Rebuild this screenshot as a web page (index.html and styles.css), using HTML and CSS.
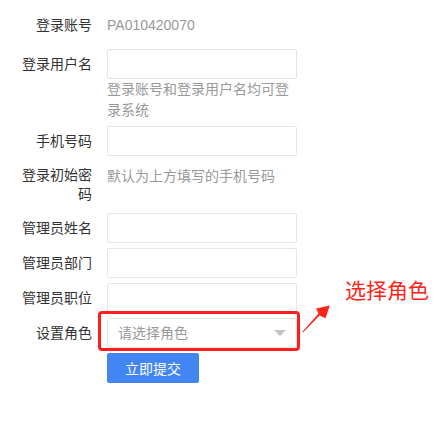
FILE: index.html
```html
<!DOCTYPE html>
<html lang="zh-CN">
<head>
<meta charset="utf-8">
<title>设置角色</title>
<link rel="stylesheet" href="styles.css">
</head>
<body>
<form class="form">
  <div class="row">
    <label class="label label-static">登录账号</label>
    <div class="value">PA010420070</div>
  </div>
  <div class="row">
    <label class="label">登录用户名</label>
    <div class="field">
      <input class="input" type="text">
      <div class="aux">登录账号和登录用户名均可登录系统</div>
    </div>
  </div>
  <div class="row">
    <label class="label">手机号码</label>
    <input class="input" type="text">
  </div>
  <div class="row">
    <label class="label label-wrap">登录初始密码</label>
    <div class="mid">默认为上方填写的手机号码</div>
  </div>
  <div class="row">
    <label class="label">管理员姓名</label>
    <input class="input" type="text">
  </div>
  <div class="row">
    <label class="label">管理员部门</label>
    <input class="input" type="text">
  </div>
  <div class="row">
    <label class="label">管理员职位</label>
    <input class="input" type="text">
  </div>
  <div class="row">
    <label class="label">设置角色</label>
    <div class="select-wrap">
      <div class="select">
        <span class="placeholder">请选择角色</span>
        <span class="edge"></span>
      </div>
      <div class="highlight"></div>
      <svg class="arrow" width="32" height="32" viewBox="0 0 32 32">
        <polygon points="3,29.6 19.6,12.6 25.6,15.2 29.8,2.6 16.2,5.4 18.4,10.8 2.4,28.8" fill="#ff2418"/>
      </svg>
      <div class="callout">选择角色</div>
    </div>
  </div>
  <div class="row">
    <span></span>
    <button class="btn" type="button">立即提交</button>
  </div>
</form>
</body>
</html>
```
FILE: styles.css
```css
* {
  box-sizing: border-box;
}

body {
  margin: 0;
  background: #fff;
  font-family: "Liberation Sans", "Noto Sans CJK SC", sans-serif;
  font-size: 14px;
  color: #333;
}

.form {
  padding: 6px 0 0 12px;
}

.row {
  display: grid;
  grid-template-columns: 80px 190px;
  column-gap: 15px;
  align-items: start;
  margin-bottom: 5px;
}

.label {
  text-align: right;
  padding: 5px 0;
  line-height: 20px;
  color: #333;
}

.label-static {
  padding: 9px 0;
}

.label-wrap {
  line-height: 18.5px;
}

.value {
  padding: 9px 0;
  line-height: 20px;
  color: #999;
}

.mid {
  padding: 5px 0;
  line-height: 20px;
  color: #999;
  white-space: nowrap;
}

.field {
  display: flex;
  flex-direction: column;
}

.input {
  display: block;
  width: 190px;
  height: 30px;
  margin: 0;
  padding: 0 10px;
  border: 1px solid #e6e6e6;
  border-radius: 2px;
  background: #fff;
  font: inherit;
  outline: none;
}

.aux {
  line-height: 21px;
  color: #999;
}

.select-wrap {
  position: relative;
  width: 190px;
  height: 30px;
}

.select {
  display: flex;
  align-items: center;
  height: 30px;
  padding: 0 10px;
  border: 1px solid #e6e6e6;
  border-radius: 2px;
  background: #fff;
  position: relative;
}

.placeholder {
  color: #999;
  line-height: 20px;
}

.edge {
  position: absolute;
  right: 10px;
  top: 50%;
  margin-top: -3px;
  width: 0;
  height: 0;
  border-style: solid;
  border-width: 6px 6px 0 6px;
  border-color: #c2c2c2 transparent transparent transparent;
}

.highlight {
  position: absolute;
  left: -9px;
  top: -7px;
  right: -3px;
  bottom: -3px;
  border: 3px solid #ff1e1e;
  border-radius: 4px;
}

.arrow {
  position: absolute;
  left: 193px;
  top: -15px;
}

.callout {
  position: absolute;
  left: 238px;
  top: -39px;
  font-size: 21px;
  line-height: 24px;
  color: #ff2418;
  white-space: nowrap;
}

.btn {
  width: 92px;
  height: 30px;
  margin: 0;
  padding: 0;
  border: none;
  border-radius: 2px;
  background: #4286f4;
  color: #fff;
  font: inherit;
  cursor: pointer;
}
```
